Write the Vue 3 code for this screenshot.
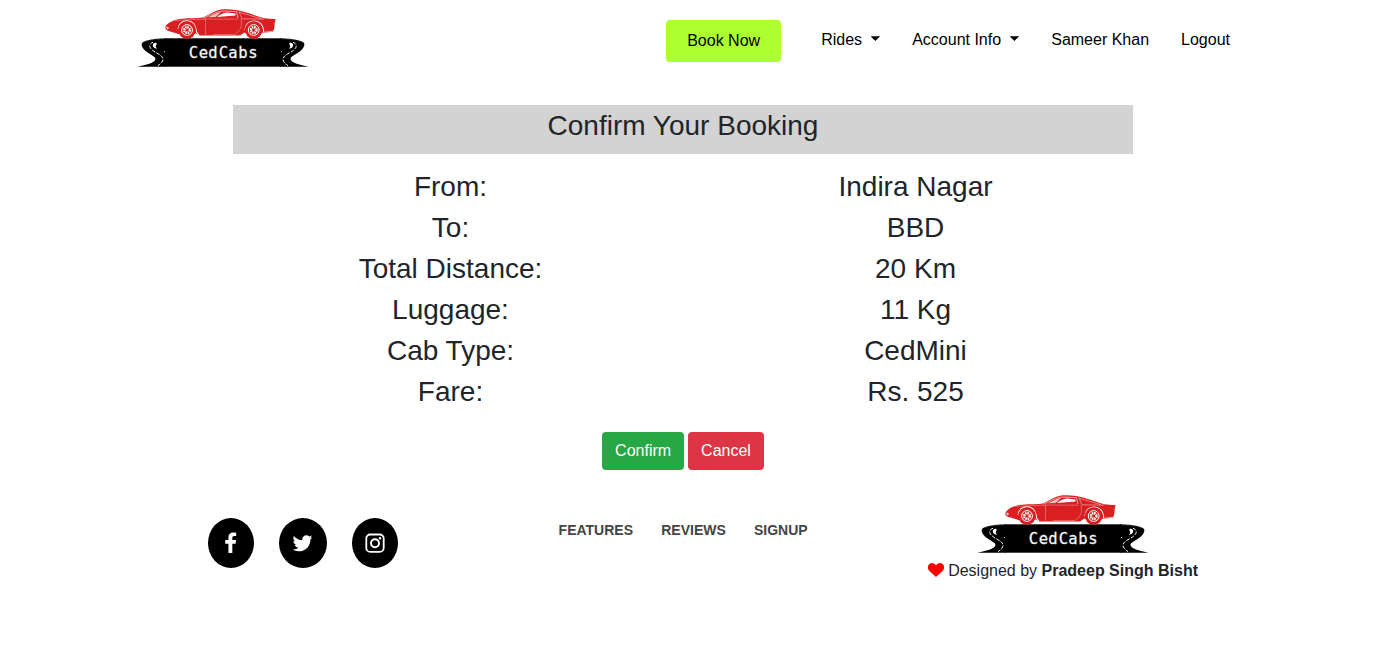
<script setup>
import { h } from 'vue'

const rows = [
  ['From:', 'Indira Nagar'],
  ['To:', 'BBD'],
  ['Total Distance:', '20 Km'],
  ['Luggage:', '11 Kg'],
  ['Cab Type:', 'CedMini'],
  ['Fare:', 'Rs. 525'],
]

const p = (d, fill, stroke, w, extra = {}) =>
  h('path', { d, fill: fill || 'none', stroke: stroke || 'none', 'stroke-width': w || 0, ...extra })

const curl = () => [
  p('M0.5 58.7 C9 57 17.500 55 18.500 51 C18.500 47 5 44.500 4.600 36 C4.800 32.800 16 30.400 29 30.300 L29 58.700 Z', '#000'),
  p('M8 33.300 C13 31.500 20 31 26 30.800', null, '#999', 0.500, { 'stroke-dasharray': '4 1.500' }),
  p('M16 36 C17.500 34.300 20.500 34.500 19.500 36.500 C18.500 38 18.500 39 20 40.800 C17 40.500 15.300 38.500 16 36 Z', '#fff'),
  p('M16 34.200 C9.500 37 14 42 19 44.600 C26 48 29.500 52 21 57.600', null, '#fff', 1, { 'stroke-dasharray': '3.6 1.4' }),
  p('M27 43.600 h1.500', null, '#fff', 0.800),
]

const wheel = (cx) => [
  h('circle', { cx, cy: 22, r: 8.8, fill: '#d91f22' }),
  h('circle', { cx, cy: 22, r: 5.4, fill: '#d91f22', stroke: '#fff', 'stroke-width': 1 }),
  h('circle', { cx, cy: 22, r: 2.8, fill: 'none', stroke: '#fff', 'stroke-width': 2.4, 'stroke-dasharray': '1.5 0.7' }),
]

// Brand mark: sports car standing on a road-shaped ribbon
const Logo = () =>
  h('svg', { width: 172, height: 60, viewBox: '0 0 172 60' }, [
    h('g', curl()),
    h('g', { transform: 'translate(172 0) scale(-1 1)' }, curl()),
    h('rect', { x: 28, y: 30.3, width: 116, height: 28.4, fill: '#000' }),
    p('M28 18.8 C31.500 14 38 11.300 45 10.800 C54 10 61 10.500 66 9.600 C72 6.500 78 2.600 84 1.500 C92 0.600 101 1.800 106 3.600 C114 5.800 121 8.600 127 10.300 L138.7 11.300 L137.500 15.500 C138 18 137 21 136 23.800 L126 24.800 L107 24.800 L103 27.400 L62 27.400 L57 24.500 L42 26.200 C37 24.200 32 23.500 29 22 Z', '#d91f22'),
    p('M66.500 10.200 C75 6.200 80 3.400 87 3 L99.500 3.600 L101 10.200', null, '#fff', 0.600),
    p('M80 8.900 C83 6.500 86 5 90 4.600 L98.500 5.600 L98.500 7.600 Z', '#fff'),
    p('M71 9.300 C76 6.800 80 4.600 84 3.900 L78.500 9 Z', '#fff', null, 0, { opacity: 0.75 }),
    p('M102 3.800 L105 10.800 L127 11.200 M102 4.200 C110 6.500 118 9 124 10.600', null, '#fff', 0.600, { opacity: 0.700 }),
    p('M38 12.600 C47 11.200 58 12.200 69 11 L101 11.200 M68.500 11 V26.800 M104 11 C105 17 104 21 102.500 22 L98 26.500 L76 26.500', null, '#fff', 0.500, { opacity: 0.600 }),
    p('M41 21 C42 15.500 45.500 12.800 50 12.800 C55.500 12.800 58.800 17 59.500 24 L62 27.300', null, '#fff', 1.100),
    p('M108 22 C108 16.500 112 13 117 13 C122 13 126.400 16.500 126.800 24.500', null, '#fff', 1.100),
    p('M28.500 18.800 l3 1.200 l-2 1.600', null, '#fff', 1),
    p('M128.500 24 L136 23.200', null, '#fff', 0.600),
    wheel(50),
    wheel(116.7),
    h('text', { x: '56.3 66.3 75.9 86.3 96 106 115.900', y: 50.3, class: 'logo-text' }, 'CedCabs'),
  ])
</script>

<template>
  <div class="page">
    <header class="nav">
      <a class="brand"><Logo /></a>
      <nav class="links">
        <a class="book">Book Now</a>
        <a class="link">Rides <i class="caret"></i></a>
        <a class="link">Account Info <i class="caret"></i></a>
        <a class="link">Sameer Khan</a>
        <a class="link">Logout</a>
      </nav>
    </header>

    <main class="booking">
      <h3 class="title">Confirm Your Booking</h3>
      <div class="rows">
        <template v-for="[label, value] in rows" :key="label">
          <div class="cell">{{ label }}</div>
          <div class="cell">{{ value }}</div>
        </template>
      </div>
      <div class="actions">
        <button class="btn confirm">Confirm</button>
        <button class="btn cancel">Cancel</button>
      </div>
    </main>

    <footer class="footer">
      <div class="social">
        <a class="round">
          <svg class="fb" width="13" height="22" viewBox="0 0 1024 1792" preserveAspectRatio="none"><path fill="#fff" d="M959 140v264H802q-86 0-116 36t-30 108v189h293l-39 296H656v759H350v-759H95V737h255V519q0-186 104-288.500T731 128q147 0 228 12z" /></svg>
        </a>
        <a class="round wide">
          <svg class="tw" width="21" height="22.600" viewBox="0 0 1664 1792"><path fill="#fff" d="M1620 408q-67 98-162 167 1 14 1 42 0 130-38 259.500T1305.500 1125 1121 1335.500t-258 146-323 54.500q-271 0-496-145 35 4 78 4 225 0 401-138-105-2-188-64.500T221 1033q33 5 61 5 43 0 85-11-112-23-185.500-111.500T108 710v-4q68 38 146 41-66-44-105-115t-39-154q0-88 44-163 121 149 294.500 238.500T820 653q-8-38-8-74 0-134 94.500-228.500T1135 256q140 0 236 102 109-21 205-78-37 115-142 178 93-10 186-50z" /></svg>
        </a>
        <a class="round">
          <svg width="20" height="20" viewBox="0 0 20 20" fill="none" stroke="#fff"><rect x="1.300" y="1.500" width="17.400" height="17.400" rx="4" stroke-width="1.800" /><circle cx="10" cy="10.200" r="4" stroke-width="1.900" /><circle cx="15" cy="5.200" r="1.200" fill="#fff" stroke="none" /></svg>
        </a>
      </div>
      <nav class="footlinks">
        <a>FEATURES</a><a>REVIEWS</a><a>SIGNUP</a>
      </nav>
      <div class="credit">
        <Logo />
        <div class="by">
          <svg class="heart" width="16" height="14" viewBox="0 0 16 14"><path fill="red" d="M8 14 L0.900 7.400 C-0.500 5.700 -0.300 2.500 1.300 1 C3.200 -0.500 6 -0.200 8 2.300 C10 -0.200 12.800 -0.500 14.700 1 C16.300 2.500 16.500 5.700 15.100 7.400 Z" /></svg>
          Designed by <b>Pradeep Singh Bisht</b>
        </div>
      </div>
    </footer>
  </div>
</template>

<style>
body { margin: 0; background: #fff; }
.logo-text {
  font: 15.5px "DejaVu Sans Mono", monospace;
  fill: #f4f4f4;
  stroke: #f4f4f4;
  stroke-width: 0.3px;
  text-anchor: middle;
}
</style>

<style scoped>
.page {
  width: 1366px;
  height: 672px;
  overflow: hidden;
  font: 16px/24px "Liberation Sans", Arial, sans-serif;
  color: #212529;
}
.nav {
  display: flex;
  justify-content: space-between;
  align-items: flex-start;
  height: 105px;
  padding: 0 136px 0 137px;
  box-sizing: border-box;
}
.brand { margin-top: 8px; }
.brand svg { display: block; }
.links { display: flex; color: #000; padding-top: 20px; }
.book {
  width: 115px;
  height: 42px;
  line-height: 42px;
  text-align: center;
  border-radius: 4px;
  background: #adff2f;
  margin-right: 40px;
}
.link { line-height: 40px; margin-right: 32px; white-space: pre; }
.link:last-child { margin-right: 0; }
.caret {
  display: inline-block;
  width: 9.600px;
  height: 4.800px;
  margin-left: 4.080px;
  vertical-align: 4.080px;
  background: #000;
  clip-path: polygon(0 0, 100% 0, 50% 100%);
}
.booking { width: 900px; margin: 0 auto; }
.title {
  margin: 0 0 12px;
  height: 49px;
  line-height: 42px;
  font-size: 28px;
  font-weight: 500;
  text-align: center;
  background: lightgray;
}
.rows {
  display: grid;
  grid-template-columns: 1fr 1fr;
  grid-auto-rows: 41px;
  margin: 0 -15px;
}
.cell { font-size: 28px; line-height: 42px; text-align: center; }
.actions { display: flex; justify-content: center; gap: 4px; margin-top: 20px; }
.btn {
  height: 38px;
  padding: 0 13px;
  border: 0;
  border-radius: 4px;
  font: inherit;
  color: #fff;
}
.confirm { background: #28a745; }
.cancel { background: #dc3545; }
.footer {
  display: flex;
  justify-content: space-between;
  padding: 24px 168px 0 208px;
}
.social { display: flex; gap: 25px; padding-top: 24px; }
.round {
  display: flex;
  align-items: center;
  justify-content: center;
  width: 46px;
  height: 50px;
  border-radius: 50%;
  background: #000;
}
.wide { width: 48px; }
.fb { margin: 0 1px 3px 0; }
.tw { margin-right: 1px; }
.footlinks {
  display: flex;
  gap: 28.200px;
  padding: 24px 0 0 40.600px;
  font-size: 14px;
  font-weight: 700;
  color: #444;
}
.credit { display: flex; flex-direction: column; align-items: center; }
.by { margin-top: 5px; white-space: nowrap; }
.heart { vertical-align: -1px; margin: 0 -0.400px 0 0.400px; }
</style>
